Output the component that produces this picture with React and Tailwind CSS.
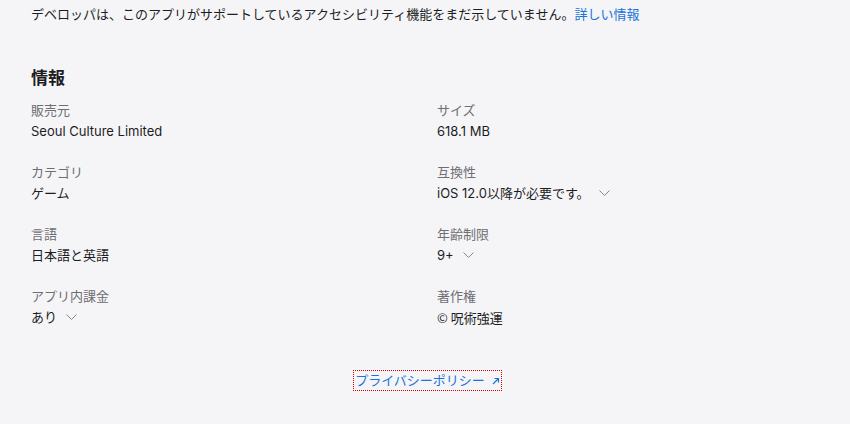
import React from 'react';

const Chevron = () => (
  <svg width="11" height="7" viewBox="0 0 11 7" className="ml-[9px] inline-block" fill="none">
    <path d="M0.5 0.5 L5.5 5.5 L10.5 0.5" stroke="#86868b" strokeWidth="1" />
  </svg>
);

const info = [
  { label: '販売元', value: 'Seoul Culture Limited' },
  { label: 'サイズ', value: '618.1 MB' },
  { label: 'カテゴリ', value: 'ゲーム' },
  { label: '互換性', value: 'iOS 12.0以降が必要です。', more: true },
  { label: '言語', value: '日本語と英語' },
  { label: '年齢制限', value: '9+', more: true },
  { label: 'アプリ内課金', value: 'あり', more: true },
  { label: '著作権', value: '© 呪術強運', cjk: true },
];

const App = () => {
  return (
    <div
      className="w-[850px] h-[424px] bg-[#f5f5f7] text-[#1d1d1f] px-[31px] pt-[4px] overflow-hidden"
      style={{ fontFamily: 'Inter, "Noto Sans CJK JP", sans-serif' }}
    >
      <p className="text-[13px] leading-[21px]">
        デベロッパは、このアプリがサポートしているアクセシビリティ機能をまだ示していません。
        <a className="text-[#1a73d9]">詳しい情報</a>
      </p>

      <h2 className="mt-[41px] text-[17px] leading-[24px] font-bold">情報</h2>

      <dl className="mt-[10px] grid grid-cols-2 gap-x-[24px] gap-y-[20px]">
        {info.map((item) => (
          <div key={item.label}>
            <dt className="text-[13px] leading-[21px] text-[#6e6e73]">{item.label}</dt>
            <dd className="text-[13px] leading-[21px] flex items-center">
              <span className={item.cjk ? 'font-["Noto_Sans_CJK_JP",sans-serif]' : ''}>{item.value}</span>
              {item.more && <Chevron />}
            </dd>
          </div>
        ))}
      </dl>

      <div className="mt-[42px] pl-[5px] flex justify-center">
        <a className="px-[1px] text-[13px] leading-[19px] text-[#1a73d9] border border-dotted border-[#d40000] flex items-center">
          プライバシーポリシー
          <svg width="8" height="8" viewBox="0 0 8 8" className="ml-[7px]" fill="none">
            <path d="M1 7 L6.5 1.5 M2.5 1.5 H6.5 V5.5" stroke="#1a73d9" strokeWidth="1.2" />
          </svg>
        </a>
      </div>
    </div>
  );
};

export default App;
